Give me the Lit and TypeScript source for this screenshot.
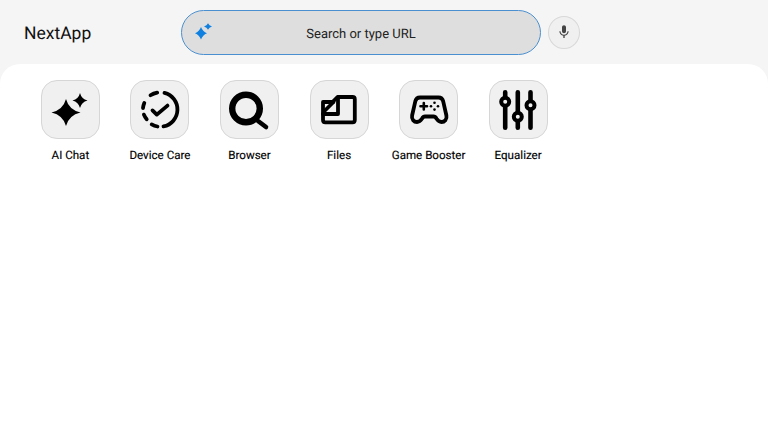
import { LitElement, html, css, svg } from "lit";
import { customElement } from "lit/decorators.js";

// four pointed sparkle, k pulls the sides in towards the centre
const star = (cx: number, cy: number, rx: number, ry: number, k = 0.2) => {
  const dx = rx * k;
  const dy = ry * k;
  return `M${cx} ${cy - ry}Q${cx + dx} ${cy - dy} ${cx + rx} ${cy}Q${cx + dx} ${cy + dy} ${cx} ${cy + ry}Q${cx - dx} ${cy + dy} ${cx - rx} ${cy}Q${cx - dx} ${cy - dy} ${cx} ${cy - ry}Z`;
};

const apps = [
  {
    name: "AI Chat",
    icon: svg`<path fill="currentColor" d=${star(16, 22.5, 14.5, 13.5)}/>
      <path fill="currentColor" d=${star(30, 10.5, 7.5, 7.5)}/>`,
  },
  {
    name: "Device Care",
    icon: svg`<g fill="none" stroke="currentColor" stroke-width="3.8" stroke-linecap="round" stroke-linejoin="round">
      <path d="M24.5 2.85A17.2 17.2 0 0 1 23.5 36.4"/>
      <path d="M10.5 5.3A17.2 17.2 0 0 1 17.2 2.6"/>
      <path d="M4.3 12.9A17.2 17.2 0 0 0 3 18"/>
      <path d="M3.9 24.6A17.2 17.2 0 0 0 6.700 29.2"/>
      <path d="M11.700 34.400A17.2 17.2 0 0 0 17.500 36.500"/>
      <path d="M12.500 20.400L16.800 24.600L27.500 15.600"/>
    </g>`,
  },
  {
    name: "Browser",
    icon: svg`<g fill="none" stroke="currentColor" stroke-linecap="round">
      <circle cx="17" cy="18.500" r="13.800" stroke-width="6.400"/>
      <path d="M29 31L37 37" stroke-width="4.600"/>
    </g>`,
  },
  {
    name: "Files",
    icon: svg`<g fill="none" stroke="currentColor" stroke-width="3.800" stroke-linejoin="round" stroke-linecap="round">
      <path d="M4 12H13.500L18.500 7H33.500C34.800 7 35.800 8 35.800 9.300V30C35.800 31.300 34.800 32.300 33.500 32.300H6.300C5 32.300 4 31.300 4 30Z"/>
      <path d="M5 21.500L14.500 12"/>
      <path d="M4 24H19V8"/>
    </g>`,
  },
  {
    name: "Game Booster",
    icon: svg`<g fill="none" stroke="currentColor" stroke-width="3.800" stroke-linecap="round" stroke-linejoin="round">
      <path d="M11 7.500H29.500C31.800 7.500 33.600 9 34.200 11.300L37.400 25.500C38.200 29.300 35.500 32 32.500 32C30.300 32 28.900 30.800 27.600 28.800C26.800 27.400 26 26.500 24.500 26.500H16C14.500 26.500 13.700 27.400 12.900 28.800C11.600 30.800 10.200 32 8 32C5 32 2.300 29.300 3.100 25.500L6.300 11.300C6.900 9 8.700 7.500 11 7.500Z"/>
      <path d="M11.500 16.200H18M14.800 13V19.500" stroke-width="2.600"/>
    </g>
    <g fill="currentColor">
      <circle cx="25.500" cy="12.800" r="1.300"/><circle cx="22" cy="16.200" r="1.300"/>
      <circle cx="29" cy="16.200" r="1.300"/><circle cx="25.500" cy="19.600" r="1.300"/>
    </g>`,
  },
  {
    name: "Equalizer",
    icon: svg`<g fill="none" stroke="currentColor" stroke-linecap="round">
      <path d="M7.200 2.300V7M7.200 17V37.700M19.800 2.300V22M19.800 32V37.700M32.500 2.300V10.500M32.500 20V37.700" stroke-width="4.600"/>
      <circle cx="7.200" cy="11.800" r="4" stroke-width="4"/>
      <circle cx="19.800" cy="26.800" r="4" stroke-width="4"/>
      <circle cx="32.500" cy="15.200" r="4" stroke-width="4"/>
    </g>`,
  },
];

@customElement("app-root")
export class AppRoot extends LitElement {
  static styles = css`
    :host {
      display: flex;
      flex-direction: column;
      height: 432px;
      overflow: hidden;
      background: #f5f5f5;
      font-family: Roboto, "Liberation Sans", sans-serif;
      color: #000;
      text-rendering: geometricPrecision;
    }

    .top {
      display: flex;
      align-items: center;
      height: 64px;
      flex: none;
      padding-left: 24px;
      box-sizing: border-box;
    }

    .brand {
      width: 157px;
      padding-top: 4px;
      font-size: 17.5px;
      line-height: 24px;
      color: #111;
    }

    .search {
      display: flex;
      align-items: center;
      width: 360px;
      height: 45px;
      box-sizing: border-box;
      padding: 0 12px;
      background: #dedede;
      border: 1px solid #4a90d0;
      border-radius: 23px;
    }

    .search svg {
      flex: none;
      width: 20px;
      height: 20px;
      color: #1080e0;
    }

    .search span {
      flex: 1;
      padding: 4px 20px 0 0;
      text-align: center;
      font-size: 13px;
      color: #222;
    }

    .mic {
      display: flex;
      align-items: center;
      justify-content: center;
      width: 32px;
      height: 33px;
      box-sizing: border-box;
      margin-left: 7px;
      background: #f0f0f0;
      border: 1px solid #d8d8d8;
      border-radius: 50%;
      color: #444;
    }

    .mic svg {
      width: 16px;
      height: 16px;
    }

    .panel {
      flex: 1;
      background: #fff;
      border-radius: 20px 20px 0 0;
      padding: 16px 0 0 25.625px;
      display: flex;
      align-items: flex-start;
    }

    .app {
      display: flex;
      flex-direction: column;
      align-items: center;
      flex: none;
      width: 89.55px;
    }

    .tile {
      display: flex;
      align-items: center;
      justify-content: center;
      width: 59px;
      height: 59px;
      box-sizing: border-box;
      background: #f0f0f0;
      border: 1px solid #d6d6d6;
      border-radius: 16px;
    }

    .tile svg {
      width: 40px;
      height: 40px;
      overflow: visible;
    }

    .name {
      margin-top: 8px;
      font-size: 11.6px;
      line-height: 16px;
      white-space: nowrap;
      color: #000;
      -webkit-text-stroke: 0.15px #000;
    }
  `;

  protected render() {
    return html`
      <div class="top">
        <div class="brand">NextApp</div>
        <div class="search">
          <svg viewBox="0 0 20 20">
            <g fill="currentColor">
              <path d=${star(7, 11.3, 6, 6.2, 0.28)} />
              <path d=${star(14, 4.5, 4, 3.2, 0.28)} />
            </g>
          </svg>
          <span>Search or type URL</span>
        </div>
        <div class="mic">
          <svg viewBox="0 0 24 24" fill="currentColor">
            <path d="M12 14c1.660 0 3-1.340 3-3V5c0-1.660-1.340-3-3-3S9 3.340 9 5v6c0 1.660 1.340 3 3 3zm5.300-3c0 3-2.540 5.100-5.300 5.100S6.700 14 6.700 11H5c0 3.410 2.720 6.230 6 6.720V21h2v-3.280c3.280-.49 6-3.310 6-6.720h-1.700z"/>
          </svg>
        </div>
      </div>
      <div class="panel">
        ${apps.map(
          (a) => html`
            <div class="app">
              <div class="tile"><svg viewBox="0 0 40 40">${a.icon}</svg></div>
              <div class="name">${a.name}</div>
            </div>
          `
        )}
      </div>
    `;
  }
}
